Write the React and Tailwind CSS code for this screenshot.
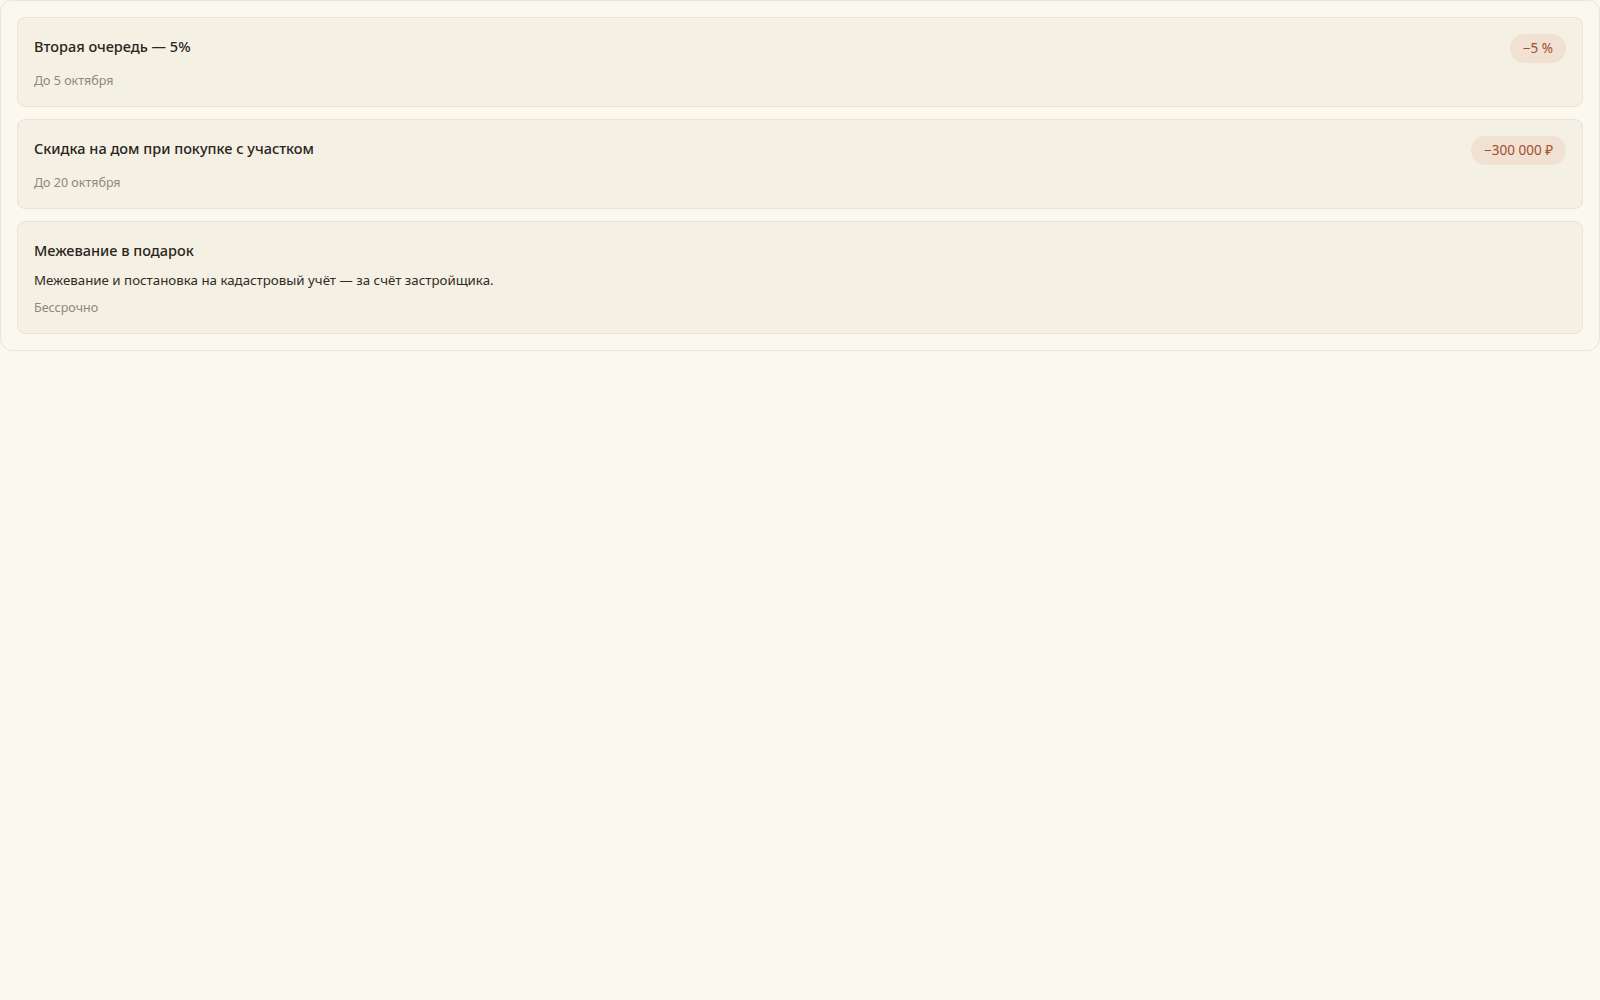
export default function App() {
  const font = { fontFamily: '"Noto Sans", "Open Sans", sans-serif' };
  const cards = [
    { title: "Вторая очередь — 5%", date: "До 5 октября", badge: "−5 %" },
    { title: "Скидка на дом при покупке с участком", date: "До 20 октября", badge: "−300 000 ₽" },
    {
      title: "Межевание в подарок",
      desc: "Межевание и постановка на кадастровый учёт — за счёт застройщика.",
      date: "Бессрочно",
    },
  ];
  return (
    <div className="min-h-[1000px] bg-[#fbf8f0]" style={font}>
      <div className="border border-[#ece6d8] rounded-xl bg-[#fbf8f0] p-4 flex flex-col gap-3">
        {cards.map((c) => (
          <div key={c.title} className="border border-[#ebe4d4] rounded-lg bg-[#f5f0e4] p-4">
            <div className="flex items-start justify-between gap-4">
              <div className="text-[14.5px] leading-[22px] font-medium text-[#2a2520] pt-[1px]">{c.title}</div>
              {c.badge && (
                <div className="h-[29px] px-[13px] rounded-full bg-[#f0e1d3] text-[#a24f2a] text-[13.5px] flex items-center">
                  {c.badge}
                </div>
              )}
            </div>
            {c.desc && (
              <div className="mt-[10px] text-[13.3px] leading-[18px] text-[#2f2a24]">{c.desc}</div>
            )}
            <div className={`${c.badge ? "mt-[9px]" : "mt-[10px]"} text-[12.5px] leading-[18px] text-[#8d877d]`}>{c.date}</div>
          </div>
        ))}
      </div>
    </div>
  );
}
